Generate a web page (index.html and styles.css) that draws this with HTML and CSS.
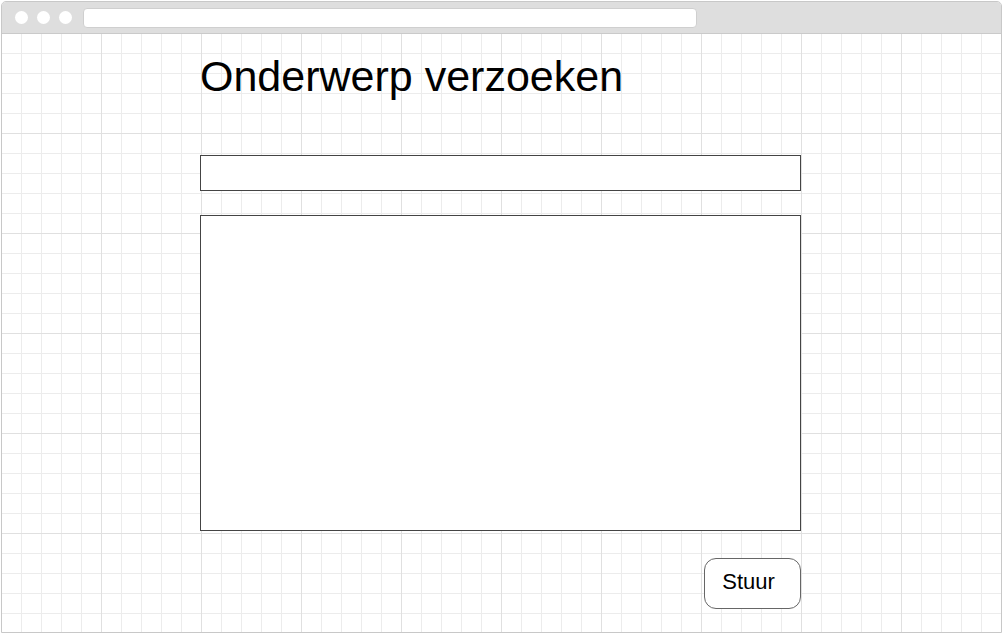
FILE: index.html
```html
<!DOCTYPE html>
<html lang="nl">
<head>
<meta charset="utf-8">
<title>Onderwerp verzoeken</title>
<link rel="stylesheet" href="styles.css">
</head>
<body>
<div class="window">
  <div class="bar">
    <div class="dots">
      <span class="dot"></span><span class="dot"></span><span class="dot"></span>
    </div>
    <div class="url"></div>
  </div>
  <div class="canvas">
    <form class="form">
      <h1 class="title">Onderwerp verzoeken</h1>
      <input class="field" type="text">
      <textarea class="area"></textarea>
      <div class="actions">
        <button class="send" type="button">Stuur</button>
      </div>
    </form>
  </div>
</div>
</body>
</html>
```
FILE: styles.css
```css
html, body {
  margin: 0;
  padding: 0;
  background: #fff;
}
body {
  padding: 1px 0 0 1px;
  font-family: "Liberation Sans", Arial, sans-serif;
}
.window {
  box-sizing: border-box;
  width: 1001px;
  height: 632px;
  border: 1px solid #c8c8c8;
  border-radius: 5px 5px 0 0;
  display: flex;
  flex-direction: column;
  overflow: hidden;
}
.bar {
  box-sizing: border-box;
  height: 32px;
  flex: none;
  background: #dedede;
  border-bottom: 1px solid #cacaca;
  display: flex;
  align-items: center;
  padding: 0 0 0 13px;
  gap: 11px;
}
.dots {
  display: flex;
  gap: 9px;
}
.dot {
  width: 13px;
  height: 13px;
  border-radius: 50%;
  background: #fff;
}
.url {
  box-sizing: border-box;
  width: 614px;
  height: 20px;
  background: #fff;
  border: 1px solid #cfcfcf;
  border-radius: 4px;
}
.canvas {
  flex: 1;
  background-color: #fff;
  background-image:
    linear-gradient(to right, transparent 99px, #e0e0e0 99px, #e0e0e0 100px),
    linear-gradient(to bottom, transparent 99px, #e0e0e0 99px, #e0e0e0 100px),
    linear-gradient(to right, transparent 19px, #ececec 19px, #ececec 20px),
    linear-gradient(to bottom, transparent 19px, #ececec 19px, #ececec 20px);
  background-size: 100px 100px, 100px 100px, 20px 20px, 20px 20px;
}
.form {
  margin: 0 0 0 198px;
  width: 601px;
  display: flex;
  flex-direction: column;
}
.title {
  margin: 18px 0 55px 0;
  font-size: 43px;
  line-height: 48px;
  font-weight: normal;
  color: #000;
}
.field {
  box-sizing: border-box;
  display: block;
  width: 601px;
  height: 36px;
  margin: 0;
  border: 1px solid #444;
  border-radius: 0;
  background: #fff;
  padding: 0 8px;
  outline: none;
}
.area {
  box-sizing: border-box;
  display: block;
  width: 601px;
  height: 316px;
  margin: 24px 0 0 0;
  border: 1px solid #444;
  border-radius: 0;
  background: #fff;
  resize: none;
  outline: none;
}
.actions {
  display: flex;
  justify-content: flex-end;
  margin-top: 27px;
}
.send {
  box-sizing: border-box;
  width: 97px;
  height: 51px;
  border: 1px solid #666;
  border-radius: 12px;
  background: #fff;
  font-family: "Liberation Sans", Arial, sans-serif;
  font-size: 22px;
  color: #000;
  padding: 0 8px 4px 0;
}
```
